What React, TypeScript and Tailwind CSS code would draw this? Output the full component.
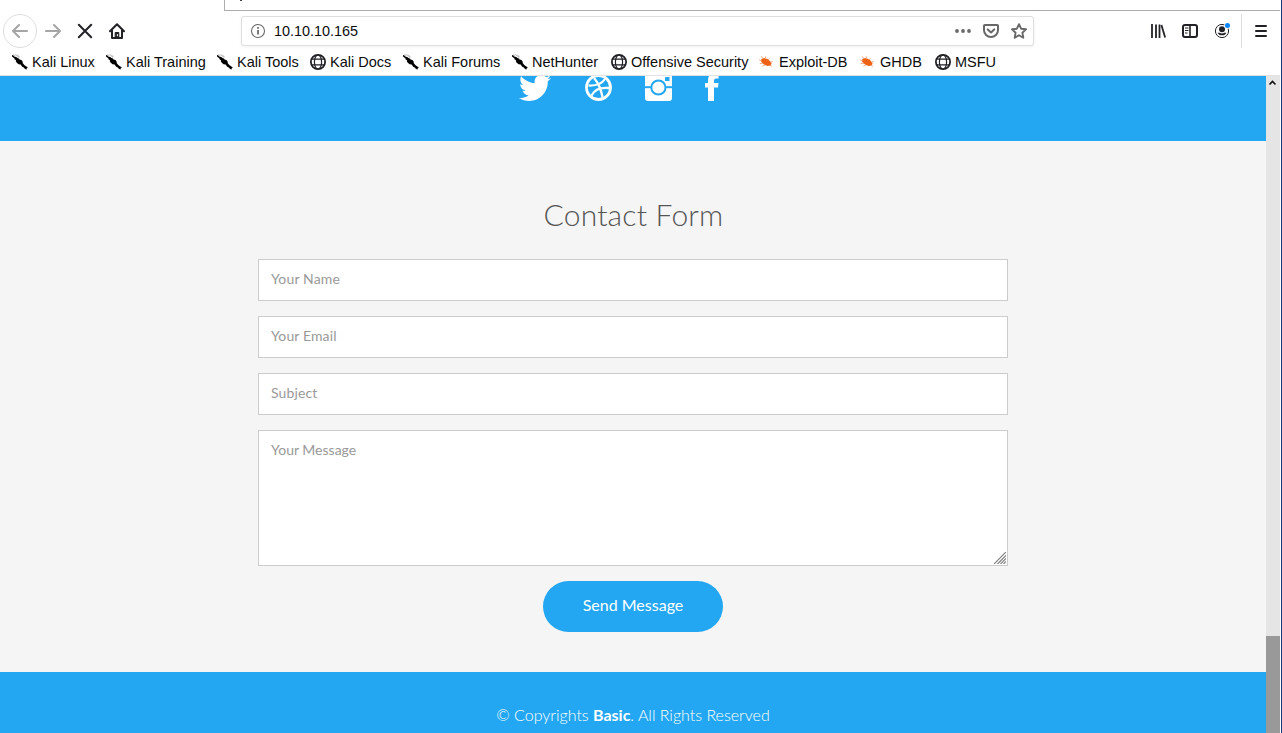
import React from 'react';
import { FaTwitter } from 'react-icons/fa';

const KaliIcon = () => (
  <svg className="h-4 w-4 shrink-0" viewBox="0 0 16 16" fill="#000">
    <path d="M0 1 1.4 1.6 3 3 4 2.8 5.4 4 6.4 4.2 7.6 5.4 9.4 6 10.6 7.4 10.8 9.2 12.6 11.2 14 12.2 16 13.4 14.8 14 14.6 15.6 13 15 11.8 13.4 10.2 12.8 8.6 10.4 6.6 10.2 4.8 8.8 3.8 7.2 4.2 6.4 2.2 5 2.6 4.4 0 2.4Z" />
    <path d="M3.4.3 7.6 4M1.4.6 3.4 1.8M5.4.8 7.4 3" stroke="#888" strokeWidth=".6" fill="none" />
  </svg>
);

const GlobeIcon = () => (
  <svg className="h-4 w-4 shrink-0" viewBox="0 0 16 16" fill="none" stroke="#222226">
    <circle cx="8" cy="8" r="7.1" strokeWidth="1.8" />
    <ellipse cx="8" cy="8" rx="3.6" ry="7" strokeWidth="1.2" />
    <path d="M1.5 5.2h13M1.5 10.8h13" strokeWidth="1.2" />
  </svg>
);

const BugIcon = () => (
  <svg className="h-4 w-4 shrink-0" viewBox="0 0 16 16">
    <path d="M2 5.4 5 4 9.5 5.4 12.6 9 11.8 11.4 8.4 12 5 10.6 2.2 8Z" fill="#ee6216" />
    <path d="M4 5 2.4 2.4M7 5 6.2 2.4M3 7 0 5.8M4 9.2.8 9.6M6 11 3.4 12.2M9 6 10.4 4.4M11.4 8 13.6 7.6M11 11 13 12.4" stroke="#f0a278" strokeWidth=".9" fill="none" />
  </svg>
);

const icons = { kali: KaliIcon, globe: GlobeIcon, bug: BugIcon };

const bookmarks: { label: string; icon: keyof typeof icons; width: string }[] = [
  { label: 'Kali Linux', icon: 'kali', width: 'w-[94px]' },
  { label: 'Kali Training', icon: 'kali', width: 'w-[111px]' },
  { label: 'Kali Tools', icon: 'kali', width: 'w-[93px]' },
  { label: 'Kali Docs', icon: 'globe', width: 'w-[93px]' },
  { label: 'Kali Forums', icon: 'kali', width: 'w-[109px]' },
  { label: 'NetHunter', icon: 'kali', width: 'w-[99px]' },
  { label: 'Offensive Security', icon: 'globe', width: 'w-[148px]' },
  { label: 'Exploit-DB', icon: 'bug', width: 'w-[101px]' },
  { label: 'GHDB', icon: 'bug', width: 'w-[75px]' },
  { label: 'MSFU', icon: 'globe', width: 'w-[70px]' },
];

function TabStrip() {
  return (
    <div className="flex h-[11px] shrink-0">
      <div className="w-[224px]" />
      <div className="flex-1 border-b border-l border-[#adadad] pl-[15px]">
        <div className="h-px w-[2px] bg-[#444]" />
      </div>
    </div>
  );
}

function Toolbar() {
  return (
    <div className="flex h-[40px] shrink-0 items-center pl-[3px]">
      <div className="flex h-[34px] w-[34px] items-center justify-center rounded-full border border-[#dedede]">
        <svg className="h-4 w-4" viewBox="0 0 16 16" fill="none" stroke="#a5a5a6" strokeWidth="2" strokeLinecap="round" strokeLinejoin="round">
          <path d="M15 8H1.2M7 2 1 8l6 6" />
        </svg>
      </div>
      <svg className="ml-2 h-4 w-4" viewBox="0 0 16 16" fill="none" stroke="#a5a5a6" strokeWidth="2" strokeLinecap="round" strokeLinejoin="round">
        <path d="M1 8h13.8M9 2l6 6-6 6" />
      </svg>
      <svg className="ml-4 h-4 w-4" viewBox="0 0 16 16" fill="none" stroke="#222226" strokeWidth="2" strokeLinecap="round">
        <path d="M1.8 1.8l12.4 12.4M14.2 1.8 1.8 14.2" />
      </svg>
      <svg className="ml-4 h-4 w-4" viewBox="0 0 16 16" fill="none" stroke="#222226" strokeWidth="2" strokeLinecap="round" strokeLinejoin="round">
        <path d="M1 8.2 8 1.2l7 7M3 7.5V15h10V7.5" />
        <path d="M6.2 14.5v-5h3.6v5" fill="#222226" strokeWidth="1" />
        <path d="M8.4 11.5v1.3" stroke="#fff" strokeWidth="1" />
      </svg>
      <div className="ml-[116px] flex h-[30px] w-[793px] items-center rounded-[3px] border border-[#dedede] bg-white pl-2 pr-[6px] shadow-[0_1px_3px_rgba(0,0,0,0.06)]">
        <svg className="h-4 w-4" viewBox="0 0 16 16" fill="none" stroke="#6b6b6d">
          <circle cx="8" cy="8" r="6.5" strokeWidth="1.1" />
          <path d="M8 7v4.6M8 4v1.7" strokeWidth="1.8" />
        </svg>
        <span className="ml-2 flex-1 text-[14.4px] leading-5 text-[#0c0c0d]">10.10.10.165</span>
        <svg className="h-4 w-4" viewBox="0 0 16 16" fill="#68686a">
          <circle cx="2" cy="8" r="1.9" />
          <circle cx="8" cy="8" r="1.9" />
          <circle cx="14" cy="8" r="1.9" />
        </svg>
        <svg className="ml-3 h-4 w-4" viewBox="0 0 16 16" fill="none" stroke="#68686a" strokeWidth="2" strokeLinecap="round" strokeLinejoin="round">
          <path d="M1.8 2h12.4q.8 0 .8.8V7.3a7 6.7 0 0 1-14 0V2.8Q1 2 1.8 2Z" />
          <path d="M4.8 6.4 8 9.4l3.2-3" />
        </svg>
        <svg className="ml-3 h-4 w-4" viewBox="0 0 16 16" fill="none" stroke="#68686a" strokeWidth="1.9" strokeLinejoin="round">
          <path d="m8 1.2 2.1 4.5 4.9.6-3.6 3.4.9 5L8 12.2l-4.3 2.5.9-5L1 6.3l4.9-.6Z" />
        </svg>
      </div>
      <svg className="ml-[116px] h-4 w-4" viewBox="0 0 16 16" fill="none" stroke="#222226" strokeWidth="1.8">
        <path d="M2 1v14M6 1.5V15M9.5 1.5V15" />
        <path d="m11.4 2 3.8 12.6" />
      </svg>
      <svg className="ml-4 h-4 w-4" viewBox="0 0 16 16" fill="none" stroke="#222226">
        <rect x="1" y="2" width="14" height="12" rx="2" strokeWidth="2" />
        <path d="M8 2v12" strokeWidth="1.6" />
        <path d="M3 5h3.5M3 7.5h3.5M3 10h2.5" strokeWidth="1" />
      </svg>
      <svg className="ml-4 h-4 w-4" viewBox="0 0 16 16">
        <circle cx="8" cy="8" r="6.6" fill="none" stroke="#222226" strokeWidth="1" />
        <circle cx="8" cy="6.2" r="3" fill="#222226" />
        <path d="M3.6 9.8h2q2.4 1.300 4.800 0h2a4.600 3.600 0 0 1-8.800 0Z" fill="#222226" />
        <circle cx="13.5" cy="2.5" r="3.2" fill="#fff" />
        <circle cx="13.5" cy="2.5" r="2.5" fill="#0a84ff" />
      </svg>
      <div className="ml-[11px] h-[34px] w-px bg-[#dedede]" />
      <svg className="ml-[11px] h-4 w-4" viewBox="0 0 16 16" stroke="#222226" strokeWidth="2" strokeLinecap="round">
        <path d="M3 3h10M3 8h10M3 13h10" />
      </svg>
    </div>
  );
}

function Bookmarks() {
  return (
    <div className="flex h-[25px] shrink-0 items-center border-b border-[#e2e2e3] pb-[2px] pl-3">
      {bookmarks.map(({ label, icon, width }) => {
        const Icon = icons[icon];
        return (
          <div key={label} className={`flex shrink-0 items-center gap-1 whitespace-nowrap text-[14.5px] leading-[18px] text-[#0c0c0d] ${width}`}>
            <Icon />
            <span className="pb-px">{label}</span>
          </div>
        );
      })}
    </div>
  );
}

function SocialBar() {
  return (
    <div className="flex h-[65px] shrink-0 items-start overflow-hidden bg-[#24a7f2] pl-[519px] text-white">
      <FaTwitter className="-mt-[4px] h-[32px] w-[32px]" />
      <svg className="-mt-[2px] ml-[34px] h-[27px] w-[27px]" viewBox="0 0 27 27">
        <circle cx="13.5" cy="13.5" r="12" fill="none" stroke="currentColor" strokeWidth="2.8" />
        <g fill="none" stroke="currentColor" strokeWidth="2.3">
          <path d="M9 4q6 6.500 8.500 19M3.500 11.500q12 .5 16.500-6.500M6.500 21.500q4.500-9 17.500-7.500" />
        </g>
      </svg>
      <svg className="-mt-[2px] ml-[33px] h-[27px] w-[27px]" viewBox="0 0 27 27">
        <rect width="27" height="27" rx="3" fill="currentColor" />
        <path d="M0 13.2h27" stroke="#24a7f2" strokeWidth="2" />
        <circle cx="13.4" cy="13.5" r="7.1" fill="#fff" stroke="#24a7f2" strokeWidth="2" />
        <rect x="20" y="3" width="4.5" height="4" rx=".5" fill="#24a7f2" />
      </svg>
      <svg className="-mt-[2px] ml-[33px] h-[27px] w-[14px]" viewBox="0 0 14 27" fill="currentColor">
        <path d="M3 27V13.500H0V9h3V6.200Q3 0 8.800 0H13.500v4.500H11Q9 4.500 9 6.500V9h4.500l-.5 4.500H9V27Z" />
      </svg>
    </div>
  );
}

const fieldClass =
  'block w-full rounded-none border border-[#ccc] bg-white px-3 text-[14px] leading-[20px] text-[#555] outline-none placeholder:text-[#999] placeholder:opacity-100';

function ContactForm() {
  return (
    <form className="flex h-[531px] shrink-0 flex-col items-center bg-[#f5f5f5]">
      <h2 className="mt-[53px] h-[65px] pl-px text-[30px] font-light leading-[40px] tracking-[0.2px] text-[#555]">Contact Form</h2>
      <div className="flex w-[750px] flex-col gap-[15px]">
        <input className={`h-[42px] pt-[6px] pb-[10px] tracking-[0.15px] ${fieldClass}`} placeholder="Your Name" />
        <input className={`h-[42px] pt-[6px] pb-[10px] tracking-[0.12px] ${fieldClass}`} placeholder="Your Email" />
        <input className={`h-[42px] pt-[6px] pb-[10px] tracking-[0.12px] ${fieldClass}`} placeholder="Subject" />
        <div className="relative h-[136px]">
          <textarea className={`h-[136px] resize-none pt-[9px] ${fieldClass}`} placeholder="Your Message" />
          <svg className="absolute right-[2px] bottom-[2px] h-3 w-3" viewBox="0 0 12 12" stroke="#808080" strokeWidth="1.2" fill="none">
            <path d="M0 12 12 0M3.5 12 12 3.5M6.5 12 12 6.5M9.5 12 12 9.5" />
          </svg>
        </div>
      </div>
      <button type="button" className="mt-[15px] h-[51px] w-[180px] rounded-full bg-[#24a7f2] pb-[4px] text-[16px] text-white">
        Send Message
      </button>
    </form>
  );
}

export default function App() {
  return (
    <div className="flex h-[733px] w-[1282px] overflow-hidden border-r border-[#173a7c] bg-white font-['Liberation_Sans',sans-serif]">
      <div className="flex w-[1280px] shrink-0 flex-col">
        <TabStrip />
        <Toolbar />
        <Bookmarks />
        <div className="flex h-[657px] shrink-0">
          <main className="flex w-[1266px] flex-col font-['Lato',sans-serif]">
            <SocialBar />
            <ContactForm />
            <footer className="h-[61px] shrink-0 bg-[#24a7f2] pt-[31px] text-center text-[16px] font-light leading-[23px] text-white">
              © Copyrights <strong className="font-bold">Basic</strong>. All Rights Reserved
            </footer>
          </main>
          <div className="flex w-[14px] flex-col justify-between bg-[#e5e5e5]">
            <svg className="h-[14px] w-[14px]" viewBox="0 0 14 14" fill="none" stroke="#111" strokeWidth="1.6">
              <path d="m3.5 8.5 3-3 3 3" />
            </svg>
            <div className="h-[97px] bg-[#999]" />
          </div>
        </div>
      </div>
    </div>
  );
}
